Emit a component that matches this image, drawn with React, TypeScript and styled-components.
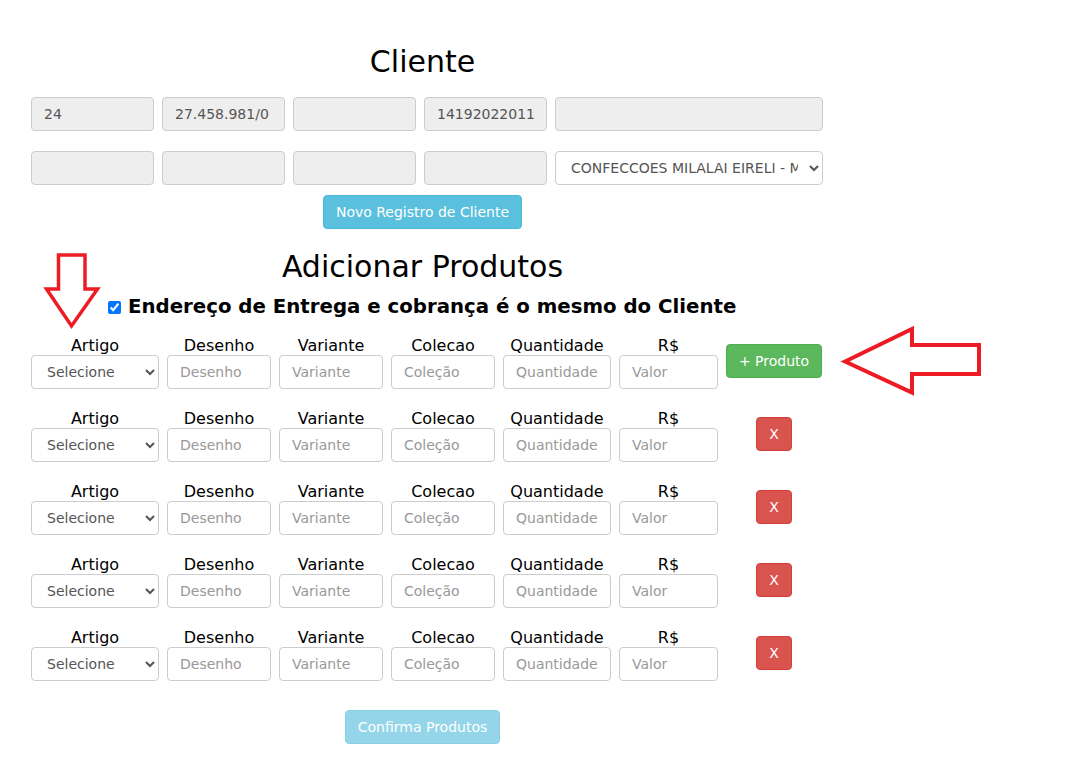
import styled, { createGlobalStyle } from 'styled-components';

const GlobalStyle = createGlobalStyle`
  body {
    margin: 0;
    background: #fff;
    font-family: "DejaVu Sans", Verdana, sans-serif;
    color: #000;
  }
`;

const Page = styled.div`
  position: relative;
  width: 815px;
  margin-left: 15px;
  padding-top: 45px;
  padding-bottom: 30px;
`;

const Title = styled.h2`
  margin: 0;
  font-size: 30px;
  font-weight: 400;
  line-height: 33px;
  text-align: center;
`;

const ClientGrid = styled.div`
  display: grid;
  grid-template-columns: repeat(4, 123px) 268px;
  column-gap: 8px;
  row-gap: 20px;
  margin: 19px 7px 0 16px;
`;

const Field = styled.input<{ $readOnly?: boolean }>`
  box-sizing: border-box;
  width: 100%;
  height: 34px;
  padding: 6px 12px;
  border: 1px solid #ccc;
  border-radius: 4px;
  background: ${(p) => (p.$readOnly ? '#eee' : '#fff')};
  color: #555;
  font-family: "DejaVu Sans", Verdana, sans-serif;
  font-size: 14px;
  outline: none;

  &::placeholder {
    color: #999;
  }
`;

const Select = styled.select`
  box-sizing: border-box;
  width: 100%;
  height: 34px;
  padding: 6px 8px 6px 11px;
  border: 1px solid #ccc;
  border-radius: 4px;
  background: #fff;
  color: #555;
  font-family: "DejaVu Sans", Verdana, sans-serif;
  font-size: 14px;
`;

const Centered = styled.div<{ $top: number }>`
  display: flex;
  justify-content: center;
  margin-top: ${(p) => p.$top}px;
`;

const Button = styled.button<{ $color: string; $border: string; $faded?: boolean }>`
  height: 34px;
  padding: 6px 12px;
  border: 1px solid ${(p) => p.$border};
  border-radius: 4px;
  background: ${(p) => p.$color};
  color: #fff;
  font-family: "DejaVu Sans", Verdana, sans-serif;
  font-size: 14px;
  white-space: nowrap;
  opacity: ${(p) => (p.$faded ? 0.65 : 1)};
  cursor: pointer;
`;

const AddButton = styled(Button)`
  width: 96px;
  padding: 6px 0;
`;

const RemoveButton = styled(Button)`
  width: 36px;
  padding: 0;
`;

const SubTitle = styled(Title)`
  margin-top: 21px;
`;

const SameAddress = styled.label`
  display: flex;
  align-items: center;
  gap: 7px;
  margin: 12px 0 0 93px;
  font-size: 19.75px;
  font-weight: 700;
  line-height: 24px;

  input {
    width: 13px;
    height: 13px;
    margin: 0;
    accent-color: #0075ff;
  }
`;

const Products = styled.div`
  display: flex;
  flex-direction: column;
  gap: 20px;
  margin: 17px 8px 0 16px;
`;

const ProductRow = styled.div`
  display: grid;
  grid-template-columns: 128px 104px 104px 104px 108px 99px 96px;
  column-gap: 8px;
  align-items: center;
`;

const Column = styled.div`
  display: flex;
  flex-direction: column;
`;

const Label = styled.span`
  font-size: 16px;
  line-height: 19px;
  text-align: center;
`;

const ActionCell = styled.div`
  display: flex;
  justify-content: center;
  margin-top: -3px;
`;

const Arrow = styled.svg`
  position: absolute;
  overflow: visible;
  pointer-events: none;
`;

const columns = [
  { label: 'Desenho', placeholder: 'Desenho' },
  { label: 'Variante', placeholder: 'Variante' },
  { label: 'Colecao', placeholder: 'Coleção' },
  { label: 'Quantidade', placeholder: 'Quantidade' },
  { label: 'R$', placeholder: 'Valor' },
];

const App = () => {
  const rows = [0, 1, 2, 3, 4];

  return (
    <>
      <GlobalStyle />
      <Page>
        <Title>Cliente</Title>
        <ClientGrid>
          <Field $readOnly readOnly value="24" />
          <Field $readOnly readOnly value="27.458.981/0" />
          <Field $readOnly readOnly value="" />
          <Field $readOnly readOnly value="14192022011" />
          <Field $readOnly readOnly value="" />
          <Field $readOnly readOnly value="" />
          <Field $readOnly readOnly value="" />
          <Field $readOnly readOnly value="" />
          <Field $readOnly readOnly value="" />
          <Select defaultValue="c">
            <option value="c">CONFECCOES MILALAI EIRELI - ME</option>
          </Select>
        </ClientGrid>
        <Centered $top={10}>
          <Button $color="#5bc0de" $border="#46b8da">Novo Registro de Cliente</Button>
        </Centered>

        <SubTitle>Adicionar Produtos</SubTitle>
        <SameAddress>
          <input type="checkbox" defaultChecked />
          Endereço de Entrega e cobrança é o mesmo do Cliente
        </SameAddress>

        <Products>
          {rows.map((i) => (
            <ProductRow key={i}>
              <Column>
                <Label>Artigo</Label>
                <Select defaultValue="s">
                  <option value="s">Selecione</option>
                </Select>
              </Column>
              {columns.map((c) => (
                <Column key={c.label}>
                  <Label>{c.label}</Label>
                  <Field placeholder={c.placeholder} />
                </Column>
              ))}
              <ActionCell>
                {i === 0 ? (
                  <AddButton $color="#5cb85c" $border="#4cae4c">+ Produto</AddButton>
                ) : (
                  <RemoveButton $color="#d9534f" $border="#d43f3a">X</RemoveButton>
                )}
              </ActionCell>
            </ProductRow>
          ))}
        </Products>

        <Centered $top={29}>
          <Button $color="#5bc0de" $border="#46b8da" $faded>Confirma Produtos</Button>
        </Centered>

        <Arrow width="60" height="80" style={{ left: 28, top: 250 }}>
          <polygon
            points="15.5,5 42,5 42,39 54.5,39 28.5,76 3.5,39 15.5,39"
            fill="none"
            stroke="#ed1c24"
            strokeWidth="3.5"
            strokeLinejoin="miter"
          />
        </Arrow>
        <Arrow width="145" height="72" style={{ left: 825, top: 325 }}>
          <polygon
            points="5,36.5 72,4 72,20 139,20 139,49 72,49 72,67.5"
            fill="none"
            stroke="#ed1c24"
            strokeWidth="4"
            strokeLinejoin="miter"
          />
        </Arrow>
      </Page>
    </>
  );
};

export default App;
